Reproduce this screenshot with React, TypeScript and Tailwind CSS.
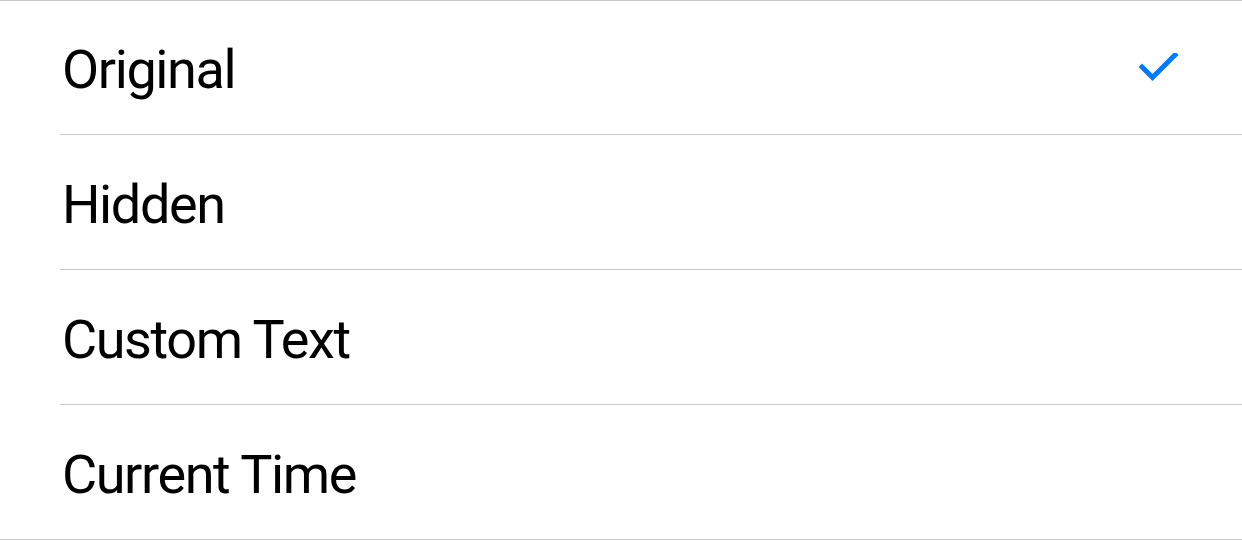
import React from "react";

const items = ["Original", "Hidden", "Custom Text", "Current Time"];

export default function App() {
  return (
    <div className="w-[1242px] h-[540px] bg-white" style={{ fontFamily: "Roboto, 'Noto Sans', sans-serif" }}>
      <div className="border-t border-b border-[#c8c7cc]">
        {items.map((label, i) => (
          <div key={label} className="pl-[60px]">
            <div
              className={
                "flex items-center justify-between pr-[59px] " +
                (i === 0
                  ? "h-[134px] border-b border-[#c8c7cc]"
                  : i < items.length - 1
                  ? "h-[135px] border-b border-[#c8c7cc]"
                  : "h-[134px]")
              }
            >
              <span className="pl-[2px] pt-[5px] text-[54px] leading-none text-black tracking-[-1.4px]">{label}</span>
              {i === 0 && (
                <svg width="44" height="36" viewBox="0 0 44 36" className="mt-[7px]">
                  <path d="M3 14 L13.5 24.5 L36 2" fill="none" stroke="#007aff" strokeWidth="5" strokeLinecap="square" />
                </svg>
              )}
            </div>
          </div>
        ))}
      </div>
    </div>
  );
}
